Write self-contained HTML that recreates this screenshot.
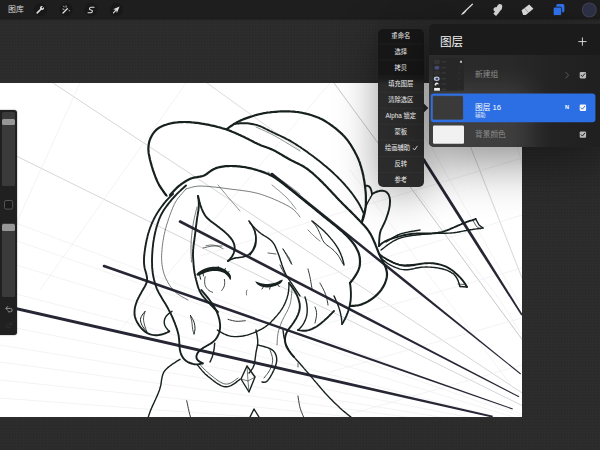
<!DOCTYPE html>
<html lang="zh"><head><meta charset="utf-8"><title>Procreate</title>
<style>
html,body{margin:0;padding:0}
body{width:600px;height:450px;overflow:hidden;position:relative;background:#2d2d2d;font-family:"Liberation Sans","Noto Sans CJK SC",sans-serif;}
.bg{position:absolute;left:0;top:0;width:600px;height:450px;background-color:#2d2d2d;
background-image:repeating-linear-gradient(0deg,rgba(0,0,0,.045) 0,rgba(0,0,0,.045) 1px,transparent 1px,transparent 3px),repeating-linear-gradient(90deg,rgba(0,0,0,.045) 0,rgba(0,0,0,.045) 1px,transparent 1px,transparent 3px);}
.topbar{position:absolute;left:0;top:0;width:600px;height:18px;background:#1e1e1e;box-shadow:0 1px 2px rgba(0,0,0,.55);}
.canvas{position:absolute;left:0;top:83px;width:522px;height:334px;background:#fff;overflow:hidden;}
.canvas svg{position:absolute;left:0;top:-83px;}
.side{position:absolute;left:0;top:110px;width:17.2px;height:224.8px;background:#202020;border-radius:0 3px 3px 0;box-shadow:0 0 1.5px rgba(0,0,0,.6);}
.track{position:absolute;left:2.2px;width:12.6px;background:#3a3a3a;border-radius:1.5px;}
.thumb{position:absolute;left:2.2px;width:12.6px;background:#979797;border-radius:1.5px;}
.menu{position:absolute;left:378px;top:29px;width:45.6px;height:158px;border-radius:5px;background:linear-gradient(180deg,#171717 0,#171717 47px,#2c2c2c 56px,#2c2c2c 100%);box-shadow:0 6px 42px rgba(0,0,0,.38);overflow:hidden;}
.layers{position:absolute;left:429px;top:23.6px;width:176px;height:123px;border-radius:5px;background:#1b1b1b;box-shadow:0 12px 52px 2px rgba(0,0,0,.46);overflow:hidden;}
.layers .rows{position:absolute;left:0;top:31px;width:176px;height:92px;background:linear-gradient(90deg,#2b2b2b 0,#292929 45%,#232323 70%,#1f1f1f 100%);}
.layers .glow{position:absolute;left:-10px;top:62px;width:112px;height:80px;background:rgba(255,255,255,.10);filter:blur(12px);}
.ov{position:absolute;left:0;top:0;}
.t{position:absolute;color:#ececec;white-space:nowrap;line-height:1;margin:0;font-family:"Liberation Sans","Noto Sans CJK SC",sans-serif;}
</style></head><body>
<div class="bg"></div>

<div class="canvas"><svg width="600" height="450" viewBox="0 0 600 450" fill="none" stroke-linecap="round" stroke-linejoin="round">
<path d="M53.0 83.0L523.0 393.5" stroke="#c4c4ca" stroke-width="0.7"/>
<path d="M0.0 148.0L523.0 406.0" stroke="#c4c4ca" stroke-width="0.7"/>
<path d="M0.0 217.0L523.0 414.7" stroke="#ebebee" stroke-width="0.6"/>
<path d="M0.0 260.0L523.0 420.0" stroke="#ebebee" stroke-width="0.6"/>
<path d="M0.0 345.0L523.0 430.7" stroke="#ebebee" stroke-width="0.6"/>
<path d="M0.0 380.0L523.0 435.1" stroke="#ebebee" stroke-width="0.6"/>
<path d="M0.0 235.0L523.0 416.9" stroke="#ebebee" stroke-width="0.6"/>
<path d="M0.0 290.0L523.0 423.8" stroke="#ebebee" stroke-width="0.6"/>
<path d="M0.0 325.0L523.0 428.2" stroke="#ebebee" stroke-width="0.6"/>
<path d="M0.0 362.0L523.0 432.8" stroke="#ebebee" stroke-width="0.6"/>
<path d="M0.0 398.0L523.0 437.4" stroke="#ebebee" stroke-width="0.6"/>
<path d="M334.0 83.0L523.0 340.7" stroke="#b0b0b6" stroke-width="0.7"/>
<path d="M395.0 83.0L523.0 310.0" stroke="#ebebee" stroke-width="0.6"/>
<path d="M445.5 83.0L522.0 278.0" stroke="#c4c4ca" stroke-width="0.7"/>
<path d="M500.0 83.0L523.0 167.5" stroke="#ebebee" stroke-width="0.6"/>
<path d="M80.0 83.0L17.0 222.0" stroke="#ebebee" stroke-width="0.6"/>
<path d="M186.0 83.0L40.0 290.0" stroke="#ebebee" stroke-width="0.6"/>
<path d="M207.0 83.0L300.0 150.0" stroke="#c4c4ca" stroke-width="0.6"/>
<path d="M330.0 83.0L120.0 330.0" stroke="#ebebee" stroke-width="0.6"/>
<path d="M522.0 158.0L300.0 225.0L200.0 256.0" stroke="#ebebee" stroke-width="0.6"/>
<path d="M522.0 215.0L300.0 284.0" stroke="#ebebee" stroke-width="0.6"/>
<path d="M522.0 268.0L300.0 331.0" stroke="#ebebee" stroke-width="0.6"/>
<path d="M522.0 318.0L330.0 372.0" stroke="#ebebee" stroke-width="0.6"/>
<path d="M522.0 365.0L340.0 417.0" stroke="#ebebee" stroke-width="0.6"/>
<path d="M415.0 190.0L500.0 300.0L522.0 335.0" stroke="#ebebee" stroke-width="0.6"/>
<path d="M350.0 170.0L470.0 330.0L522.0 400.0" stroke="#ebebee" stroke-width="0.6"/>
<path d="M103.57 267.23L328.38 345.82L512.53 409.47L512.87 408.53L329.19 343.48L104.43 264.77Z" fill="#262634" stroke="none"/>
<path d="M179.40 222.65L365.88 318.96L518.77 397.14L519.23 396.26L367.02 316.76L180.60 220.35Z" fill="#262634" stroke="none"/>
<path d="M-0.33 306.46L344.57 384.58L492.50 417.58L492.90 415.82L345.21 381.80L0.33 303.54Z" fill="#262634" stroke="none"/>
<path d="M422.48 160.58L481.52 253.66L521.28 315.45L522.72 314.55L483.84 252.18L424.92 159.02Z" fill="#262634" stroke="none"/>
<path d="M271.19 175.01L408.01 284.96L520.39 374.39L521.01 373.61L409.56 283.04L272.81 172.99Z" fill="#262634" stroke="none"/>
<path d="M196.4 274.2L197.5 273.1L198.6 272.1L199.8 271.2L201.0 270.4L202.4 269.7L203.8 269.1L205.2 268.5L206.6 268.1L208.1 267.6L209.5 267.3L211.0 267.0L212.5 266.8L214.0 266.7L215.5 266.7L217.0 266.8L218.5 267.0L220.0 267.3L221.4 267.8L222.8 268.4L224.2 269.0L225.5 269.8L226.7 270.7L227.8 271.7L228.9 272.7L229.9 273.9L230.6 275.2L231.0 276.6L231.0 278.2L230.8 279.6L230.1 279.9L229.4 278.6L228.6 277.3L227.6 276.1L226.6 275.0L225.5 274.0L224.2 273.1L222.9 272.5L221.4 272.0L220.0 271.6L218.5 271.3L217.0 271.1L215.5 271.0L214.0 271.0L212.5 271.1L211.0 271.3L209.5 271.6L208.0 271.9L206.6 272.3L205.2 272.8L203.8 273.4L202.4 274.0L201.0 274.6L199.6 275.2L198.2 275.8L197.0 275.5L196.4 274.2Z" fill="#17211f" stroke="none"/>
<path d="M255.2 281.2L256.6 281.8L258.0 282.3L259.4 282.8L260.9 283.2L262.4 283.5L263.9 283.8L265.4 284.0L266.9 284.0L268.4 283.9L269.9 283.7L271.4 283.5L272.9 283.2L274.3 282.9L275.8 282.4L277.2 281.9L278.6 281.3L279.9 280.6L281.3 279.9L282.5 279.6L282.6 280.8L281.8 282.1L280.7 283.2L279.5 284.0L278.2 284.7L276.8 285.3L275.4 285.9L273.9 286.3L272.5 286.7L271.0 287.0L269.5 287.2L268.0 287.4L266.5 287.4L265.0 287.3L263.5 287.0L262.0 286.7L260.6 286.2L259.2 285.6L257.9 284.7L256.8 283.8L255.9 282.5L255.2 281.2Z" fill="#17211f" stroke="none"/>
<path d="M104.00 266.00 l0.01 0" stroke="#262634" stroke-width="2.6"/>
<path d="M180.00 221.50 l0.01 0" stroke="#262634" stroke-width="2.6"/>
<path d="M0.00 305.00 l0.01 0" stroke="#262634" stroke-width="3.0"/>
<path d="M423.70 159.80 l0.01 0" stroke="#262634" stroke-width="2.9"/>
<path d="M272.00 174.00 l0.01 0" stroke="#262634" stroke-width="2.6"/>
<path d="M166.0 195.0L165.1 193.8L164.2 192.6L163.4 191.3L162.5 190.1L161.6 188.9L160.8 187.6L160.0 186.4L159.2 185.1L158.5 183.8L157.8 182.4L157.2 181.1L156.6 179.7L156.0 178.3L155.4 176.9L154.9 175.5L154.4 174.1L153.9 172.7L153.4 171.3L152.9 169.9L152.5 168.4L152.0 167.0L151.6 165.5L151.2 164.1L150.8 162.7L150.4 161.2L150.0 159.8L149.7 158.3L149.4 156.8L149.1 155.3L148.8 153.9L148.6 152.4L148.5 150.9L148.4 149.4L148.4 147.9L148.5 146.4L148.7 144.9L148.9 143.4L149.2 142.0L149.6 140.6L150.1 139.2L150.7 137.8L151.4 136.4L152.1 135.1L152.9 133.9L153.8 132.7L154.7 131.5L155.7 130.4L156.8 129.4L158.0 128.5L159.2 127.7L160.5 126.9L161.9 126.3L163.2 125.7L164.6 125.1L166.0 124.7L167.5 124.2L168.9 123.8L170.4 123.5L171.9 123.2L173.3 122.9L174.8 122.7L176.3 122.5L177.8 122.3L179.3 122.2L180.8 122.1L182.3 122.1L183.8 122.0L185.3 122.0L186.8 122.1L188.3 122.1L189.8 122.2L191.3 122.3L192.8 122.5L194.3 122.6L195.8 122.8L197.3 122.9L198.8 123.1L200.2 123.3L201.7 123.6L203.2 123.8L204.7 124.1L206.2 124.3L207.6 124.6L209.1 124.9L210.6 125.3L212.1 125.6L213.5 125.9L215.0 126.2L216.4 126.6L217.9 127.0L219.4 127.3L220.8 127.7L222.2 128.2L223.7 128.6L225.1 129.0L226.5 129.5L227.9 130.0L229.4 130.6L230.8 131.1L232.1 131.7L233.5 132.3L234.9 132.8L236.3 133.5L237.7 134.1L239.0 134.7L240.4 135.3L241.7 136.0L243.1 136.6L244.5 137.2L245.8 137.9L247.2 138.6L248.5 139.2L249.8 139.9L251.2 140.6L252.5 141.3L253.8 142.0L255.2 142.7L256.5 143.3L257.9 144.0L259.3 144.6L260.6 145.2L262.0 145.8L263.4 146.3L264.8 146.8L266.3 147.3L267.7 147.8L269.1 148.3L270.5 148.9L271.9 149.4L273.2 150.1L274.6 150.7L275.9 151.4L277.2 152.2L278.5 152.9L279.8 153.7L281.1 154.4L282.4 155.2L283.7 156.0L285.0 156.8L286.3 157.5L287.6 158.3L288.9 159.0L290.2 159.7L291.5 160.4L292.9 161.1L294.2 161.7L295.6 162.4L296.9 163.0L298.3 163.7L299.6 164.4L300.9 165.1L302.3 165.8L303.6 166.5L304.8 167.3L306.1 168.2L307.3 169.0L308.5 169.9L309.7 170.8L310.9 171.8L312.0 172.7L313.2 173.7L314.3 174.7L315.4 175.7L316.5 176.8L317.6 177.8L318.7 178.8L319.8 179.9L320.8 180.9L321.9 181.9L323.0 183.0L324.0 184.1L325.1 185.1L326.1 186.2L327.2 187.3L328.2 188.4L329.2 189.5L330.3 190.6L331.3 191.7L332.3 192.8L333.3 193.9L334.4 195.0L335.4 196.1L336.4 197.2L337.4 198.3L338.5 199.4L339.5 200.5L340.6 201.5L341.6 202.6L342.7 203.7L343.7 204.7L344.8 205.8L345.9 206.9L346.9 207.9L348.0 209.0L349.1 210.0L350.2 211.1L351.2 212.1L352.3 213.2L353.3 214.3L354.4 215.3L355.4 216.4L356.5 217.5L357.5 218.6L358.6 219.6L359.6 220.7L360.7 221.8L361.7 222.9L362.7 224.0L363.8 225.1L364.8 226.2L365.7 227.3L366.7 228.5L367.6 229.7L368.5 230.9L369.3 232.1L370.1 233.4L370.9 234.7L371.6 236.0L372.3 237.4L372.9 238.7L373.5 240.1L374.1 241.5L374.7 242.8L375.3 244.2L375.8 245.6L376.4 247.0L376.9 248.4L377.5 249.8L378.0 251.2L378.6 252.6L379.2 254.0L379.8 255.4L380.4 256.7L381.1 258.1L381.7 259.4L382.4 260.8L383.1 262.1L383.8 263.4L384.5 264.8L385.1 266.1L385.7 267.5L386.1 268.9L386.5 270.4L386.8 271.8L387.0 273.3L387.0 274.8L386.9 276.2L386.7 277.7L386.3 279.2L385.9 280.6L385.4 282.0L384.9 283.4L384.2 284.8L383.6 286.1L382.8 287.4L382.0 288.7L381.2 289.9L380.3 291.1L379.3 292.2L378.3 293.3L377.3 294.4L376.2 295.4L375.1 296.4L373.9 297.4L372.7 298.3L371.5 299.2L370.3 300.0L369.0 300.8L367.7 301.6L366.4 302.3L365.0 302.9L363.6 303.5L362.3 304.1L360.8 304.6L359.4 305.0L357.9 305.3L356.5 305.5L355.0 305.7L353.5 305.8L352.0 305.9L350.5 306.0L350.0 306.0" stroke="#17211f" stroke-width="2.2"/>
<path d="M227.0 129.0L228.2 128.1L229.4 127.2L230.6 126.3L231.9 125.5L233.1 124.6L234.4 123.8L235.7 123.1L237.0 122.3L238.3 121.6L239.7 121.0L241.0 120.3L242.4 119.7L243.8 119.1L245.2 118.6L246.6 118.1L248.0 117.6L249.5 117.1L250.9 116.6L252.3 116.2L253.8 115.7L255.2 115.3L256.7 114.9L258.1 114.5L259.6 114.2L261.1 113.8L262.5 113.5L264.0 113.2L265.5 113.0L267.0 112.7L268.5 112.5L270.0 112.4L271.5 112.2L273.0 112.0L274.5 111.9L276.0 111.8L277.5 111.6L279.0 111.5L280.5 111.4L282.0 111.4L283.5 111.3L285.0 111.3L286.5 111.3L288.0 111.3L289.5 111.4L291.0 111.5L292.5 111.6L294.0 111.7L295.5 111.9L297.0 112.0L298.5 112.2L300.0 112.5L301.4 112.7L302.9 113.0L304.4 113.3L305.9 113.6L307.3 114.0L308.8 114.4L310.2 114.8L311.7 115.2L313.1 115.7L314.5 116.2L315.9 116.7L317.3 117.3L318.7 117.8L320.1 118.5L321.4 119.1L322.8 119.8L324.1 120.5L325.4 121.3L326.7 122.1L327.9 122.9L329.2 123.7L330.4 124.6L331.7 125.5L332.9 126.4L334.1 127.3L335.3 128.2L336.4 129.1L337.6 130.1L338.7 131.1L339.9 132.1L341.0 133.1L342.1 134.1L343.1 135.2L344.2 136.3L345.2 137.4L346.1 138.6L347.1 139.7L348.0 140.9L348.9 142.1L349.7 143.4L350.6 144.6L351.4 145.9L352.1 147.2L352.9 148.5L353.7 149.8L354.4 151.1L355.1 152.4L355.8 153.8L356.5 155.1L357.1 156.4L357.8 157.8L358.4 159.2L358.9 160.6L359.5 162.0L360.0 163.4L360.4 164.9L360.9 166.3L361.3 167.7L361.7 169.2L362.1 170.6L362.5 172.1L362.8 173.6L363.2 175.0L363.5 176.5L363.7 178.0L364.0 179.5L364.3 180.9L364.5 182.4L364.7 183.9L364.9 185.4L365.1 186.9L365.3 188.4L365.4 189.9L365.6 191.4L365.7 192.9L365.8 194.4L365.9 195.9L365.9 197.4L365.9 198.9L365.9 200.4L365.9 201.9L365.9 203.4L365.8 204.9L365.7 206.4L365.5 207.9L365.3 209.4L365.1 210.9L364.8 212.4L364.5 213.8L364.1 215.3L363.7 216.7L363.3 218.2L362.8 219.6L362.3 221.0L362.0 222.0" stroke="#17211f" stroke-width="2.2"/>
<path d="M234.0 124.0L235.5 123.8L237.0 123.6L238.5 123.5L240.0 123.3L241.5 123.2L243.0 123.2L244.5 123.2L246.0 123.2L247.5 123.3L249.0 123.5L250.4 123.7L251.9 124.0L253.4 124.3L254.9 124.6L256.3 124.9L257.8 125.4L259.2 125.8L260.6 126.4L262.0 127.0L263.3 127.6L264.7 128.3L266.0 129.0L267.4 129.6L268.7 130.3L270.0 131.0L271.4 131.7L272.7 132.4L274.1 133.0L275.4 133.7L276.8 134.3L278.2 134.9L279.5 135.5L280.9 136.2L282.3 136.8L283.6 137.4L285.0 138.1L286.3 138.8L287.7 139.5L289.0 140.2L290.3 140.9L291.6 141.7L292.9 142.5L294.2 143.3L295.5 144.0L296.7 144.9L298.0 145.7L299.2 146.5L300.5 147.3L301.7 148.2L303.0 149.0L304.2 149.9L305.5 150.8L306.7 151.6L307.9 152.5L309.1 153.4L310.3 154.3L311.6 155.2L312.8 156.1L314.0 157.0L315.2 157.9L316.4 158.8L317.5 159.7L318.7 160.6L319.9 161.6L321.1 162.5L322.3 163.5L323.4 164.4L324.6 165.4L325.7 166.3L326.9 167.3L328.0 168.3L329.2 169.3L330.3 170.3L331.4 171.3L332.5 172.3L333.6 173.3L334.7 174.4L335.8 175.4L336.9 176.4L338.0 177.5L339.0 178.6L340.1 179.6L341.1 180.7L342.2 181.8L343.2 182.9L344.2 184.0L345.2 185.1L346.2 186.3L347.2 187.4L348.1 188.6L349.1 189.7L350.0 190.9L351.0 192.1L351.9 193.3L352.8 194.5L353.7 195.7L354.5 196.9L355.4 198.2L356.2 199.4L357.1 200.7L357.9 201.9L358.7 203.2L359.4 204.5L360.1 205.8L360.8 207.2L361.5 208.5L362.1 209.9L362.8 211.3L363.4 212.6L364.0 214.0" stroke="#17211f" stroke-width="1.9"/>
<path d="M170.0 195.0L171.0 193.9L172.1 192.8L173.1 191.7L174.1 190.6L175.2 189.5L176.2 188.5L177.3 187.4L178.4 186.4L179.6 185.5L180.8 184.5L182.0 183.6L183.2 182.8L184.5 182.0L185.7 181.2L187.0 180.4L188.4 179.7L189.7 179.1L191.1 178.5L192.5 178.0L194.0 177.6L195.4 177.3L196.9 177.1L198.4 176.8L199.8 176.6L201.3 176.3L202.7 176.0L204.1 175.5L205.4 174.8L206.6 174.0L207.8 173.1L209.0 172.2L210.2 171.3L211.4 170.5L212.7 169.7L214.0 169.0L215.4 168.4L216.8 167.9L218.2 167.5L219.7 167.1L221.1 166.8L222.6 166.6L224.1 166.4L225.6 166.2L227.1 166.1L228.6 166.1L230.1 166.0L231.6 166.0L233.1 166.1L234.6 166.1L236.1 166.2L237.6 166.3L239.1 166.4L240.6 166.6L242.1 166.8L243.6 167.0L245.1 167.2L246.5 167.5L248.0 167.8L249.5 168.1L250.9 168.4L252.4 168.8L253.9 169.2L255.3 169.6L256.8 170.0L258.2 170.5L259.6 170.9L261.1 171.4L262.5 171.9L263.9 172.4L265.3 172.9L266.7 173.5L268.1 174.1L269.4 174.7L270.8 175.4L272.1 176.1L273.4 176.8L274.7 177.6L275.9 178.4L277.2 179.3L278.4 180.2L279.6 181.0L280.8 181.9L282.0 182.8L283.2 183.7L284.4 184.7L285.6 185.6L286.8 186.5L288.0 187.4L289.2 188.4L290.3 189.3L291.5 190.2L292.7 191.1L293.9 192.1L295.1 193.0L296.2 194.0L297.4 194.9L298.6 195.9L299.7 196.8L300.9 197.8L302.0 198.7L303.2 199.7L304.4 200.7L305.5 201.6L306.7 202.6L307.9 203.5L309.0 204.5L310.2 205.4L311.4 206.3L312.5 207.3L313.7 208.2L314.9 209.2L316.0 210.1L317.2 211.1L318.4 212.0L319.5 213.0L320.7 213.9L321.9 214.9L323.0 215.8L324.2 216.8L325.4 217.7L326.5 218.7L327.7 219.6L328.9 220.5L330.1 221.5L331.2 222.4L332.4 223.4L333.6 224.3L334.8 225.2L335.9 226.2L337.1 227.1L338.2 228.1L339.4 229.1L340.5 230.1L341.7 231.0L342.8 232.0L343.9 233.1L345.0 234.1L346.1 235.1L347.1 236.2L348.2 237.3L349.2 238.4L350.2 239.5L351.2 240.7L352.1 241.8L353.0 243.0L353.9 244.2L354.8 245.5L355.6 246.7L356.3 248.0L357.0 249.4L357.7 250.7L358.3 252.1L358.8 253.5L359.2 254.9L359.5 256.4L359.8 257.8L359.9 259.3L360.0 260.8L360.0 262.3L359.9 263.8L359.8 265.3L359.5 266.8L359.1 268.2L358.6 269.6L358.0 271.0L357.4 272.3L356.7 273.6L355.9 274.9L355.1 276.2L354.3 277.4L353.4 278.7L352.5 279.9L351.6 281.0L350.6 282.2L350.0 283.0" stroke="#17211f" stroke-width="2.2"/>
<path d="M256.0 127.0L257.4 127.6L258.8 128.3L260.2 128.9L261.6 129.5L262.9 130.1L264.3 130.7L265.7 131.4L267.1 132.0L268.5 132.7L269.8 133.3L271.2 134.0L272.5 134.7L273.9 135.4L275.2 136.1L276.6 136.9L277.9 137.6L279.2 138.4L280.5 139.1L281.8 139.9L283.1 140.7L284.4 141.5L285.7 142.3L287.0 143.1L288.3 143.8L289.6 144.6L290.9 145.4L292.2 146.2L293.5 147.0L294.8 147.8L296.1 148.6L297.4 149.4L298.7 150.2L300.0 151.0" stroke="#17211f" stroke-width="0.5"/>
<path d="M268.0 172.0L269.3 172.8L270.6 173.6L271.9 174.4L273.2 175.2L274.6 176.0L275.9 176.8L277.2 177.6L278.5 178.4L279.8 179.2L281.1 180.1L282.3 180.9L283.6 181.7L284.9 182.6L286.1 183.5L287.4 184.4L288.6 185.3L289.8 186.2L291.1 187.2L292.3 188.1L293.5 189.0L294.7 189.9L295.9 190.9L297.2 191.8L298.4 192.8L299.6 193.7L300.0 194.0" stroke="#17211f" stroke-width="0.5"/>
<path d="M173.0 194.0L171.9 195.0L170.8 196.1L169.7 197.1L168.7 198.2L167.6 199.3L166.6 200.4L165.6 201.5L164.7 202.7L163.7 203.9L162.8 205.1L161.9 206.3L161.0 207.5L160.1 208.7L159.3 209.9L158.4 211.2L157.6 212.5L156.8 213.7L156.1 215.0L155.3 216.4L154.6 217.7L153.9 219.0L153.3 220.4L152.6 221.7L152.0 223.1L151.4 224.5L150.9 225.9L150.3 227.3L149.8 228.7L149.3 230.2L148.9 231.6L148.4 233.0L148.0 234.5L147.6 235.9L147.3 237.4L146.9 238.9L146.6 240.3L146.3 241.8L146.0 243.3L145.7 244.8L145.5 246.3L145.2 247.8L145.0 249.2L144.8 250.7L144.6 252.2L144.4 253.7L144.3 255.2L144.1 256.7L144.0 258.2L144.0 259.7L144.0 261.2L144.0 262.7L144.1 264.2L144.3 265.7L144.5 267.2L144.8 268.7L145.2 270.1L145.6 271.6L146.0 273.0L146.4 274.5L146.7 275.9L147.0 277.4L147.1 278.9L147.0 280.3L146.8 281.8L146.4 283.2L145.8 284.5L145.1 285.9L144.4 287.2L143.6 288.5L142.9 289.8L142.1 291.1L141.4 292.4L140.7 293.7L139.9 295.0L139.2 296.4L138.5 297.7L137.9 299.0L137.2 300.4L136.7 301.8L136.2 303.2L135.7 304.7L135.3 306.1L135.0 307.6L134.7 309.0L134.6 310.5L134.5 312.0L134.5 313.5L134.6 315.0L134.9 316.5L135.3 317.9L135.8 319.3L136.4 320.7L137.0 322.0L137.8 323.3L138.6 324.6L139.4 325.8L140.3 327.0L141.3 328.2L142.3 329.3L143.4 330.3L144.5 331.3L145.7 332.1L147.0 332.9L148.4 333.6L149.7 334.1L151.2 334.6L152.6 334.9L154.1 335.1L155.6 335.2L157.1 335.2L158.5 335.1L160.0 334.8L161.5 334.5L162.9 334.1L164.4 333.7L165.7 333.1L167.1 332.5L168.4 331.8L169.3 331.3" stroke="#17211f" stroke-width="1.9"/>
<path d="M169.3 331.3L168.2 330.2L167.2 329.0L166.3 327.8L165.4 326.5L164.8 325.2L164.4 323.8L164.2 322.3L164.3 320.8L164.6 319.4L165.2 318.0L165.9 316.7L166.8 315.5L167.9 314.4L169.1 313.4L170.3 312.5L171.6 311.6L172.0 311.3" stroke="#17211f" stroke-width="1.4"/>
<path d="M186.0 185.5L184.9 186.5L183.8 187.5L182.7 188.5L181.5 189.5L180.4 190.6L179.3 191.6L178.3 192.6L177.2 193.7L176.1 194.8L175.1 195.9L174.1 197.0L173.1 198.1L172.1 199.2L171.1 200.4L170.2 201.6L169.2 202.7L168.3 203.9L167.4 205.1L166.5 206.3L165.6 207.5L164.7 208.8L163.9 210.0L163.1 211.3L162.4 212.6L161.6 213.9L160.9 215.2L160.3 216.6L159.7 218.0L159.1 219.3L158.6 220.8L158.1 222.2L157.6 223.6L157.2 225.0L156.7 226.5L156.3 227.9L155.9 229.4L155.6 230.8L155.2 232.3L154.9 233.8L154.6 235.2L154.3 236.7L154.0 238.2L153.8 239.7L153.5 241.2L153.3 242.7L153.1 244.1L153.0 245.6L152.8 247.1L152.6 248.6L152.5 250.1L152.4 251.6L152.3 253.1L152.2 254.6L152.1 256.1L152.1 257.6L152.0 259.1L152.0 260.6L152.0 262.2L152.1 263.7L152.1 265.2L152.1 266.7L152.2 268.2L152.4 269.7L152.5 271.2L152.7 272.7L152.9 274.1L153.2 275.6L153.4 277.1L153.8 278.6L154.1 280.0L154.5 281.5L154.9 282.9L155.3 284.4L155.8 285.8L156.3 287.2L156.8 288.6L157.4 290.0L158.1 291.4L158.7 292.7L159.5 294.0L160.2 295.3L161.0 296.6L161.8 297.9L162.5 299.2L163.3 300.5L164.1 301.7L164.9 303.0L165.7 304.3L166.4 305.6L167.2 306.9L167.9 308.2L168.6 309.6L169.3 310.9L170.0 312.2L170.7 313.6L171.3 314.9L172.0 316.3L172.6 317.7L173.2 319.1L173.7 320.5L174.3 321.8L174.9 323.2L175.4 324.7L175.9 326.1L176.4 327.5L176.9 328.9L177.3 330.3L177.7 331.8L178.1 333.2L178.5 334.7L178.7 336.2L178.9 337.7L179.1 339.2L179.2 340.7L179.3 342.2L179.4 343.7L179.4 345.2L179.5 346.7L179.7 348.2L179.9 349.6L180.2 351.1L180.5 352.5L181.0 354.0L181.6 355.3L182.3 356.6L183.1 357.9L184.0 359.0L185.1 360.1L186.2 361.0L187.5 361.8L188.8 362.5L190.1 363.0L191.6 363.5L193.0 363.9L194.4 364.2L195.9 364.4L197.4 364.4L198.8 364.2L200.3 363.9L201.7 363.6L202.7 363.3" stroke="#17211f" stroke-width="1.9"/>
<path d="M186.0 189.0L185.0 190.1L184.0 191.2L183.0 192.4L182.0 193.5L181.0 194.6L180.0 195.8L179.1 197.0L178.1 198.1L177.2 199.4L176.4 200.6L175.6 201.9L174.9 203.2L174.2 204.5L173.6 205.9L172.9 207.3L172.4 208.7L171.8 210.1L171.3 211.5L170.8 212.9L170.2 214.3L169.7 215.8L169.2 217.2L168.7 218.6L168.2 220.0L167.8 221.5L167.3 222.9L166.9 224.3L166.4 225.8L166.0 227.2L165.6 228.7L165.2 230.1L164.9 231.6L164.6 233.1L164.2 234.6L163.9 236.0L163.7 237.5L163.4 239.0L163.1 240.5L162.9 242.0L162.7 243.5L162.5 245.0L162.3 246.5L162.1 248.0L162.0 249.5L161.9 251.0L161.8 252.5L161.7 254.0L161.6 255.5L161.6 257.0L161.6 258.5L161.7 260.0L161.7 261.5L161.9 263.0L162.0 264.5L162.2 266.0L162.5 267.5L162.8 269.0L163.1 270.5L163.5 271.9L163.9 273.4L164.4 274.8L164.9 276.2L165.5 277.6L166.1 279.0L166.8 280.3L167.5 281.6L168.2 283.0L169.0 284.2L169.8 285.5L170.7 286.7L171.6 288.0L172.5 289.1L173.5 290.2L174.6 291.3L175.7 292.3L176.8 293.3L178.0 294.2L179.3 295.0L180.5 295.8L181.8 296.6L183.1 297.4L184.5 298.1L185.8 298.8L187.1 299.5L188.0 300.0" stroke="#17211f" stroke-width="0.6"/>
<path d="M186.0 189.0L187.4 188.5L188.9 188.1L190.3 187.7L191.8 187.2L193.2 186.9L194.7 186.6L196.2 186.4L197.7 186.2L199.2 186.1L200.7 186.1L202.2 186.1L203.7 186.2L205.2 186.2L206.7 186.3L208.2 186.5L209.7 186.6L211.2 186.7L212.7 186.9L214.2 187.0L215.7 187.2L217.2 187.4L218.7 187.5L220.2 187.7L221.7 187.9L223.2 188.1L224.7 188.3L226.2 188.5L227.6 188.7L229.1 188.9L230.6 189.1L232.1 189.3L233.6 189.5L235.1 189.6L236.6 189.8L238.1 190.0L239.6 190.2L241.1 190.4L242.6 190.6L244.1 190.8L245.6 191.0L247.1 191.2L248.6 191.5L250.0 191.7L251.5 192.0L253.0 192.3L254.5 192.6L255.9 193.0L257.4 193.3L258.8 193.7L260.3 194.1L261.7 194.6L263.2 195.1L264.6 195.5L266.0 196.1L267.4 196.6L268.8 197.1L270.2 197.7L271.6 198.2L273.0 198.8L274.4 199.4L275.8 200.0L277.2 200.6L278.5 201.2L279.9 201.9L281.3 202.5L282.6 203.2L284.0 203.8L285.3 204.5L286.6 205.2L288.0 205.9L289.3 206.7L290.6 207.5L291.8 208.3L293.0 209.2L294.1 210.2L295.2 211.2L296.2 212.3L297.2 213.4L298.2 214.6L299.1 215.8L300.0 217.0" stroke="#17211f" stroke-width="0.6"/>
<path d="M218.0 185.0L219.0 186.2L219.9 187.3L220.9 188.5L221.9 189.7L222.9 190.9L223.8 192.0L224.8 193.2L225.8 194.4L226.8 195.6L227.8 196.7L228.7 197.9L229.7 199.0L230.7 200.2L231.7 201.4L232.7 202.5L233.7 203.7L234.7 204.8L235.7 206.0L236.7 207.1L237.7 208.3L238.7 209.5L239.7 210.6L240.0 211.0" stroke="#17211f" stroke-width="0.5"/>
<path d="M272.0 185.0L273.2 186.0L274.4 186.9L275.5 187.9L276.7 188.9L277.9 189.8L279.1 190.8L280.2 191.8L281.4 192.8L282.5 193.8L283.7 194.8L284.8 195.9L285.9 196.9L287.0 198.0L288.0 199.1L289.0 200.3L290.0 201.4L291.0 202.6L291.9 203.8L292.9 205.0L293.8 206.2L294.7 207.4L295.7 208.6L296.0 209.0" stroke="#17211f" stroke-width="0.5"/>
<path d="M159.0 185.0L159.9 186.3L160.7 187.6L161.6 188.9L162.5 190.2L163.4 191.5L164.4 192.7L165.4 194.0L166.3 195.2L167.0 196.0" stroke="#17211f" stroke-width="1.4"/>
<path d="M145.0 311.5L144.0 312.7L143.0 313.9L142.1 315.1L141.3 316.5L140.8 317.9L140.5 319.4L140.6 321.0L140.9 322.5L141.4 323.9L142.1 325.3L142.8 326.7L143.7 328.0L144.6 329.2L145.7 330.3L146.7 331.5" stroke="#17211f" stroke-width="1.0"/>
<path d="M145.0 311.5L144.6 313.0L144.1 314.5L143.8 316.0L143.6 317.5L143.5 319.1L143.6 320.6L143.9 322.1L144.2 323.6L144.6 325.1L145.0 326.6L145.5 328.1L146.0 329.5L146.5 331.0L146.7 331.5" stroke="#17211f" stroke-width="0.8"/>
<path d="M190.5 315.5L191.3 316.8L192.1 318.2L192.8 319.5L193.5 320.9L194.1 322.3L194.5 323.8L194.7 325.4L194.9 326.9L195.0 328.4L194.9 330.0L194.6 331.5L194.3 333.0L194.0 334.0" stroke="#17211f" stroke-width="1.0"/>
<path d="M190.5 315.5L190.8 317.0L191.1 318.6L191.5 320.1L191.8 321.7L192.0 323.2L192.2 324.8L192.3 326.3L192.5 327.9L192.7 329.5L193.1 331.0L193.5 332.5L194.0 334.0" stroke="#17211f" stroke-width="0.8"/>
<path d="M198.0 196.0L198.2 197.5L198.5 199.0L198.6 200.5L198.8 202.0L198.8 203.5L198.8 205.0L198.8 206.5L198.6 208.0L198.5 209.5L198.3 211.0L198.0 212.5L197.8 214.0L197.6 215.5L197.3 216.9L197.1 218.4L196.9 219.9L196.7 221.4L196.5 222.9L196.3 224.4L196.1 225.9L195.9 227.4L195.7 228.9L195.6 230.4L195.4 231.9L195.2 233.4L195.0 234.9L194.8 236.4L194.6 237.9L194.4 239.4L194.2 240.9L194.0 242.4L193.8 243.9L193.6 245.4L193.4 246.9L193.3 248.4L193.1 249.9L193.1 251.4L193.0 252.9L193.0 254.4L193.0 255.9L193.1 257.5L193.2 259.0L193.3 260.5L193.4 262.0L193.5 263.5L193.6 265.0L193.7 266.5L193.9 268.0L194.1 269.5L194.3 271.0L194.5 272.5L194.8 274.0L195.1 275.4L195.4 276.9L195.8 278.4L196.1 279.8L196.5 281.3L196.9 282.8L197.3 284.2L197.7 285.7L198.1 287.1L198.6 288.5L199.2 289.9L199.8 291.3L200.5 292.6L201.3 293.9L202.2 295.2L203.1 296.4L204.0 297.5L205.0 298.7L206.0 299.8L207.0 300.9L208.1 302.0L209.1 303.1L210.2 304.2L211.2 305.3L212.3 306.3L213.3 307.4L214.4 308.5L215.5 309.5L216.6 310.6L217.6 311.7L218.0 312.0" stroke="#17211f" stroke-width="1.9"/>
<path d="M197.0 207.0L196.6 208.5L196.3 209.9L195.9 211.4L195.6 212.9L195.2 214.4L194.9 215.8L194.5 217.3L194.2 218.8L193.9 220.3L193.6 221.8L193.3 223.3L193.1 224.8L192.8 226.2L192.6 227.7L192.4 229.2L192.2 230.8L192.0 232.3L191.9 233.8L191.7 235.3L191.6 236.8L191.4 238.3L191.3 239.8L191.2 241.3L191.1 242.8L191.1 244.3L191.0 245.8L191.0 247.4L191.0 248.9L191.0 250.4L191.0 251.9L191.1 253.4L191.2 254.9L191.2 256.5L191.3 258.0L191.4 259.5L191.4 261.0L191.5 262.0" stroke="#17211f" stroke-width="0.6"/>
<path d="M198.0 196.0L198.4 197.5L198.7 198.9L199.1 200.4L199.5 201.9L199.9 203.3L200.3 204.8L200.8 206.2L201.3 207.6L201.8 209.0L202.4 210.4L203.0 211.8L203.7 213.1L204.5 214.4L205.3 215.7L206.2 216.9L207.2 218.0L208.3 219.0L209.4 220.0L210.6 221.0L211.8 221.9L213.0 222.8L214.2 223.7L215.4 224.6L216.6 225.5L217.8 226.4L219.0 227.3L220.2 228.3L221.4 229.2L222.6 230.1L223.7 231.1L224.9 232.1L226.0 233.1L227.1 234.1L228.2 235.2L229.2 236.3L230.2 237.4L231.1 238.6L232.0 239.8L232.8 241.1L233.4 242.4L234.0 243.8L234.4 245.3L234.6 246.7L234.7 248.2L234.6 249.6L234.3 251.1L233.9 252.5L233.4 253.9L232.7 255.3L232.0 256.5L231.1 257.7L230.1 258.9L229.1 260.0L228.0 261.0" stroke="#17211f" stroke-width="1.9"/>
<path d="M228.0 261.0L229.3 260.3L230.7 259.6L232.1 259.0L233.5 258.5L234.9 258.1L236.4 257.8L237.9 257.7L239.4 257.5L240.9 257.3L242.4 257.1L243.9 256.7L245.3 256.3L246.7 255.7L248.0 255.0L249.2 254.1L250.3 253.2L251.3 252.1L252.2 250.9L253.0 249.6L253.7 248.2L254.2 246.8L254.7 245.4L255.1 243.9L255.5 242.5L255.7 241.0L255.9 239.5L255.9 238.0L255.9 236.5L255.7 235.0L255.4 233.5L255.0 232.0L254.5 230.6L253.9 229.2L253.3 227.8L252.6 226.5L251.9 225.1L251.1 223.9L250.2 222.6L249.3 221.4L249.0 221.0" stroke="#17211f" stroke-width="1.5999999999999999"/>
<path d="M250.0 223.0L251.0 224.1L252.1 225.2L253.1 226.3L254.2 227.4L255.2 228.5L256.3 229.5L257.4 230.6L258.5 231.6L259.7 232.5L260.9 233.5L262.1 234.3L263.4 235.2L264.7 236.0L265.9 236.7L267.2 237.5L268.5 238.4L269.7 239.3L270.8 240.2L271.9 241.3L272.8 242.4L273.7 243.7L274.5 244.9L275.2 246.3L275.8 247.6L276.4 249.0L277.0 250.4L277.5 251.8L278.1 253.2L278.6 254.7L279.1 256.1L279.6 257.5L280.1 259.0L280.5 260.4L281.0 261.8L281.5 263.3L281.9 264.7L282.4 266.1L282.9 267.6L283.5 269.0L284.0 270.4L284.6 271.8L285.2 273.2L285.9 274.5L286.6 275.8L287.4 277.1L288.2 278.4L289.0 279.7L289.9 280.9L290.7 282.2L291.6 283.4L292.4 284.7L293.3 285.9L294.1 287.2L295.0 288.4L295.8 289.7L296.6 291.0L297.5 292.2L298.3 293.5L299.2 294.7L300.0 296.0" stroke="#17211f" stroke-width="1.4"/>
<path d="M255.0 231.0L255.2 232.5L255.4 234.1L255.6 235.6L255.8 237.1L255.9 238.7L256.0 240.2L256.0 241.8L255.9 243.3L255.7 244.8L255.3 246.2L254.7 247.7L254.0 249.0L253.3 250.4L252.4 251.6L251.5 252.9L250.6 254.2L250.0 255.0" stroke="#17211f" stroke-width="1.4"/>
<path d="M201.3 290.0L202.3 291.2L203.3 292.3L204.2 293.5L205.2 294.6L206.2 295.8L207.1 297.0L208.1 298.1L209.0 299.3L209.9 300.5L210.8 301.7L211.7 303.0L212.5 304.3L213.3 305.5L214.1 306.8L214.9 308.1L215.6 309.5L216.3 310.8L216.9 312.2L217.5 313.6L218.0 315.0L218.5 316.4L218.9 317.9L219.3 319.3L219.6 320.8L219.8 322.3L220.0 323.8L220.1 325.3L220.1 326.8L220.0 328.3L219.8 329.8L219.5 331.3L219.1 332.7L218.6 334.1L218.0 335.5L217.3 336.8L216.5 338.1L215.6 339.3L214.6 340.4L213.5 341.4L212.4 342.4L211.1 343.2L209.9 344.0L208.5 344.8L207.2 345.5L205.9 346.3L204.6 347.0L203.3 347.8L202.1 348.7L200.9 349.6L199.7 350.5L198.7 351.6L197.8 352.7L197.1 354.0L196.6 355.3L196.4 356.6L196.5 357.9L197.0 359.1L197.8 360.2L198.8 361.1L200.1 361.9L201.4 362.6L202.7 363.3" stroke="#17211f" stroke-width="1.9"/>
<path d="M312.0 221.0L313.2 221.9L314.4 222.9L315.6 223.8L316.8 224.8L318.0 225.7L319.1 226.7L320.3 227.7L321.4 228.7L322.6 229.7L323.7 230.8L324.7 231.8L325.8 232.9L326.9 234.0L327.9 235.1L328.9 236.3L329.9 237.4L330.9 238.6L331.9 239.7L332.8 240.9L333.8 242.1L334.7 243.3L335.6 244.6L336.4 245.8L337.2 247.1L338.0 248.4L338.7 249.7L339.4 251.1L340.1 252.5L340.7 253.9L341.2 255.3L341.8 256.7L342.3 258.1L342.7 259.6L343.1 261.0L343.5 262.5L343.8 264.0L344.0 265.0" stroke="#17211f" stroke-width="1.4"/>
<path d="M312.0 221.0L313.0 222.2L313.9 223.4L314.9 224.6L315.8 225.8L316.6 227.0L317.4 228.3L318.1 229.6L318.8 231.0L319.4 232.4L320.0 233.8L320.6 235.2L321.2 236.6L321.7 238.0L322.3 239.4L323.0 240.7L323.8 242.0L324.7 243.1L325.7 244.2L326.9 245.1L328.1 246.0L329.3 246.8L330.5 247.7L331.7 248.7L332.9 249.7L334.0 250.7L335.0 251.8L336.1 252.9L337.0 254.0L338.0 255.2L338.8 256.5L339.6 257.8L340.4 259.1L341.1 260.4L341.8 261.7L342.5 263.1L343.0 264.0" stroke="#17211f" stroke-width="0.9"/>
<path d="M308.0 230.0L309.1 231.1L310.2 232.3L311.3 233.4L312.4 234.5L313.6 235.6L314.7 236.6L315.9 237.7L317.1 238.7L318.4 239.7L319.6 240.7L320.0 241.0" stroke="#17211f" stroke-width="0.6"/>
<path d="M283.0 249.0L283.8 250.3L284.5 251.7L285.3 253.0L286.1 254.3L286.8 255.7L287.6 257.0L288.3 258.4L289.0 259.7L289.8 261.1L290.5 262.4L291.2 263.7L291.8 264.4L291.5 263.5L291.0 262.1L290.3 260.7L289.7 259.3L289.0 257.9L288.2 256.6L287.3 255.3L286.5 254.1L285.6 252.8L284.7 251.5L283.9 250.3L283.0 249.0" stroke="#17211f" stroke-width="0.9"/>
<path d="M280.0 265.0L280.7 266.4L281.3 267.9L282.1 269.3L282.8 270.7L283.6 272.0L284.5 273.3L285.5 274.5L286.6 275.7L287.7 276.8L288.8 277.9L290.0 279.0" stroke="#17211f" stroke-width="0.9"/>
<path d="M350.0 283.0L350.2 284.5L350.4 286.0L350.6 287.6L350.7 289.1L350.8 290.6L350.9 292.1L350.9 293.7L350.9 295.2L350.9 296.7L350.8 298.2L350.7 299.8L350.5 301.3L350.3 302.8L350.0 304.3L349.7 305.8L349.3 307.3L348.9 308.8L348.5 310.2L348.0 311.7L347.5 313.1L346.9 314.5L346.4 315.9L345.7 317.3L345.1 318.7L344.3 320.1L343.6 321.4L342.8 322.7L342.0 324.0" stroke="#17211f" stroke-width="1.9"/>
<path d="M342.0 324.0L341.9 322.5L341.7 320.9L341.6 319.4L341.4 317.9L341.1 316.3L340.8 314.8L340.5 313.3L340.1 311.8L339.7 310.3L339.3 308.9L338.8 307.4L338.3 305.9L337.7 304.5L337.2 303.1L336.6 301.6L335.9 300.2L335.3 298.8L334.7 297.4L334.0 296.0" stroke="#17211f" stroke-width="1.4"/>
<path d="M334.0 311.0L332.9 312.1L331.9 313.2L330.8 314.3L329.7 315.3L328.7 316.4L327.6 317.5L326.5 318.5L325.3 319.5L324.2 320.6L323.1 321.6L321.9 322.5L320.7 323.5L319.5 324.4L318.3 325.3L317.1 326.2L315.8 327.0L314.5 327.7L313.1 328.4L311.7 329.1L310.3 329.6L308.9 330.1L307.4 330.4L306.0 330.7L304.5 330.8L303.0 330.7L301.5 330.6L300.0 330.4L298.5 330.1L298.0 330.0" stroke="#17211f" stroke-width="1.9"/>
<path d="M298.0 330.0L299.1 329.0L300.2 327.9L301.3 326.8L302.2 325.6L303.1 324.4L303.8 323.1L304.5 321.7L305.2 320.4L305.7 318.9L306.2 317.5L306.6 316.0L306.9 314.5L307.1 313.0L307.2 311.5L307.2 310.0L307.2 308.5L307.1 306.9L306.9 305.4L306.7 303.9L306.4 302.4L306.1 300.9L305.7 299.5L305.3 298.0L305.0 297.0" stroke="#17211f" stroke-width="1.4"/>
<path d="M315.0 323.0L315.4 321.5L315.7 320.0L316.0 318.5L316.3 316.9L316.5 315.4L316.6 313.9L316.5 312.4L316.3 310.9L315.9 309.4L315.4 308.0L315.0 307.0" stroke="#17211f" stroke-width="0.9"/>
<path d="M328.0 305.0L327.8 303.5L327.5 302.0L327.2 300.4L326.9 298.9L326.6 297.4L326.1 296.0L325.6 294.5L325.1 293.1L324.5 291.7L323.8 290.3L323.1 288.9L322.4 287.5L321.7 286.2L321.0 284.8L320.2 283.5L320.0 283.0" stroke="#17211f" stroke-width="0.9"/>
<path d="M312.0 289.0L311.8 287.4L311.5 285.9L311.3 284.3L311.0 282.8L310.7 281.3L310.5 279.7L310.2 278.2L309.9 276.6L309.5 275.1L309.2 273.6L308.8 272.0L308.4 270.5L308.0 269.0" stroke="#17211f" stroke-width="0.9"/>
<path d="M289.0 283.0L289.9 284.2L290.8 285.4L291.7 286.6L292.6 287.9L293.5 289.1L294.3 290.4L295.1 291.7L295.8 293.0L296.5 294.3L297.2 295.7L297.7 297.1L298.3 298.5L298.7 300.0L299.1 301.4L299.5 302.9L299.7 304.4L299.8 305.9L299.8 307.4L299.6 308.8L299.4 310.3L299.0 311.8L298.5 313.2L298.0 314.6L297.4 316.0L296.7 317.4L296.0 318.7L295.2 320.0L294.4 321.3L293.6 322.6L292.7 323.8L291.9 325.0L291.0 326.2L290.0 327.4L289.1 328.6L288.2 329.8L287.4 331.1L286.7 332.4L286.1 333.8L285.6 335.2L285.3 336.6L285.1 338.1L285.0 339.6L285.1 341.1L285.3 342.6L285.6 344.0L286.0 345.4L286.6 346.8L287.3 348.2L288.1 349.5L288.9 350.7L289.8 351.9L290.7 353.1L291.7 354.3L292.7 355.5L293.7 356.6L294.0 357.0" stroke="#17211f" stroke-width="1.9"/>
<path d="M292.0 289.0L291.9 290.5L291.8 292.0L291.7 293.5L291.5 295.1L291.4 296.6L291.2 298.1L291.0 299.6L290.8 301.1L290.5 302.6L290.1 304.0L289.7 305.5L289.1 306.9L288.6 308.3L287.9 309.7L287.3 311.0L286.6 312.4L285.8 313.7L285.1 315.1L284.4 316.4L283.7 317.7L283.0 319.1L282.3 320.5L281.7 321.9L281.1 323.3L280.6 324.7L280.0 326.1L279.6 327.5L279.1 329.0L278.7 330.4L278.3 331.9L278.0 333.4L277.8 334.9L277.6 336.4L277.4 337.9L277.3 339.4L277.2 341.0L277.1 342.5L277.1 344.0L277.0 345.0" stroke="#17211f" stroke-width="0.6"/>
<path d="M365.0 186.0L366.3 185.8L367.5 185.8L368.7 186.2L369.6 187.0L370.4 188.1L371.0 189.5L371.4 190.9L371.7 192.4L372.0 194.0" stroke="#17211f" stroke-width="1.9"/>
<path d="M372.0 194.0L373.3 193.3L374.7 192.6L376.0 192.0L377.4 191.5L378.9 191.1L380.3 190.8L381.8 190.7L383.2 190.8L384.6 191.2L385.9 191.7L387.0 192.6L387.9 193.6L388.7 194.8L389.2 196.2L389.6 197.6L389.9 199.1L390.0 200.6L390.0 202.1L389.9 203.6L389.8 205.1L389.6 206.6L389.3 208.0L389.0 209.5L388.6 211.0L388.2 212.5L387.8 213.9L387.3 215.3L386.8 216.8L386.3 218.2L385.8 219.6L385.2 221.0L384.6 222.4L384.0 223.8L383.3 225.1L382.6 226.5L382.0 227.8L381.3 229.2L380.7 230.6L380.3 232.0L379.9 233.4L379.7 234.9L379.5 236.4L379.4 237.9L379.3 239.4L379.2 241.0L379.1 242.5L379.1 244.0L379.0 245.5L379.0 246.0" stroke="#17211f" stroke-width="1.9"/>
<path d="M372.0 195.0L371.2 196.3L370.4 197.6L369.7 199.0L368.9 200.3L368.2 201.7L367.5 203.0L366.8 204.4L366.2 205.8L365.7 207.2L365.1 208.7L364.7 210.1L364.2 211.6L363.8 213.1L363.4 214.6L363.0 216.0L362.6 217.5L362.3 219.0L362.0 220.0" stroke="#17211f" stroke-width="1.4"/>
<path d="M379.0 246.0L380.1 245.0L381.2 243.9L382.3 243.0L383.6 242.2L384.9 241.4L386.2 240.8L387.6 240.2L389.0 239.6L390.4 239.1L391.8 238.6L393.3 238.2L394.7 237.7L396.2 237.3L397.6 236.8L399.1 236.4L400.5 236.1L402.0 235.7L403.4 235.3L404.9 235.0L406.4 234.7L407.9 234.4L409.4 234.2L410.9 234.0L412.4 233.8L413.9 233.7L415.4 233.6L416.9 233.5L418.4 233.5L419.9 233.5L421.4 233.5L422.9 233.5L424.4 233.5L425.9 233.5L427.4 233.5L429.0 233.5L430.5 233.5L432.0 233.4L433.5 233.3L435.0 233.2L436.5 233.0L438.0 232.8L439.4 232.5L440.9 232.2L442.4 231.8L443.8 231.3L445.2 230.9L446.7 230.4L448.1 229.8L449.5 229.3L450.9 228.7L452.3 228.1L453.7 227.5L455.0 226.9L456.4 226.3L457.8 225.7L459.2 225.1L460.6 224.5L461.9 223.9L463.3 223.3L464.8 222.8L466.2 222.2L467.6 221.7L469.0 221.2L470.4 220.7L471.9 220.3L473.3 219.8L474.7 219.3L475.7 219.0" stroke="#17211f" stroke-width="1.9"/>
<path d="M381.0 250.0L382.2 249.1L383.4 248.2L384.6 247.3L385.8 246.3L387.0 245.4L388.2 244.5L389.5 243.7L390.7 242.8L392.0 242.0L393.3 241.2L394.6 240.5L396.0 239.8L397.3 239.2L398.7 238.6L400.1 238.1L401.6 237.6L403.0 237.2L404.5 236.9L406.0 236.6L407.5 236.3L408.9 236.0L410.4 235.8L411.9 235.6L413.4 235.4L414.9 235.2L416.4 235.0L417.9 234.8L419.4 234.7L421.0 234.5L422.5 234.4L424.0 234.2L425.5 234.1L427.0 234.0L428.5 233.8L430.0 233.7L431.5 233.6L433.0 233.4L434.5 233.3L436.0 233.3L437.5 233.2L439.0 233.2L440.6 233.2L442.1 233.2L443.6 233.2L445.1 233.2L446.6 233.2L448.1 233.1L449.6 233.1L451.1 233.0L452.6 232.9L454.1 232.7L455.6 232.5L457.1 232.3L458.6 232.0L460.1 231.7L461.6 231.4L463.1 231.1L464.6 230.8L466.1 230.6L467.5 230.3L469.0 230.0L470.5 229.8L472.0 229.6L473.5 229.3L475.0 229.1L476.5 228.9L478.0 228.7L479.5 228.5L481.0 228.3L482.5 228.1L483.0 228.0" stroke="#17211f" stroke-width="1.4"/>
<path d="M475.7 219.0L479.0 225.0L483.0 228.0" stroke="#17211f" stroke-width="1.4"/>
<path d="M473.0 220.5L476.5 226.5L480.5 229.0" stroke="#17211f" stroke-width="0.7"/>
<path d="M379.0 254.0L380.2 254.9L381.4 255.8L382.6 256.7L383.9 257.5L385.2 258.3L386.5 259.1L387.8 259.8L389.1 260.5L390.5 261.2L391.8 261.8L393.2 262.5L394.5 263.1L395.9 263.7L397.3 264.2L398.8 264.7L400.2 265.1L401.7 265.4L403.2 265.6L404.6 265.8L406.1 265.9L407.6 265.8L409.1 265.7L410.6 265.6L412.1 265.4L413.6 265.2L415.1 264.9L416.6 264.6L418.1 264.4L419.5 264.1L421.0 263.8L422.5 263.6L424.0 263.4L425.5 263.3L427.0 263.2L428.5 263.1L430.0 263.1L431.5 263.2L433.0 263.3L434.5 263.5L436.0 263.7L437.5 264.0L438.9 264.3L440.4 264.7L441.8 265.1L443.3 265.6L444.7 266.1L446.1 266.7L447.4 267.4L448.7 268.1L450.0 268.9L451.3 269.7L452.5 270.6L453.7 271.5L454.8 272.5L455.9 273.5L457.1 274.5L458.1 275.5L459.2 276.6L460.3 277.7L461.3 278.8L462.2 279.9L463.2 281.1L464.0 282.3L464.9 283.6L465.7 284.9L466.5 286.1L467.0 287.0" stroke="#17211f" stroke-width="1.9"/>
<path d="M382.0 259.0L383.2 260.0L384.3 260.9L385.5 261.9L386.7 262.8L387.9 263.6L389.2 264.4L390.5 265.2L391.9 265.8L393.2 266.5L394.6 267.1L396.0 267.7L397.4 268.2L398.8 268.7L400.3 269.1L401.8 269.4L403.2 269.6L404.7 269.8L406.2 269.8L407.7 269.7L409.2 269.5L410.7 269.3L412.2 269.0L413.7 268.7L415.1 268.3L416.6 268.0L418.1 267.7L419.6 267.5L421.1 267.3L422.6 267.1L424.1 267.1L425.6 267.0L427.1 267.0L428.6 267.1L430.1 267.1L431.6 267.2L433.1 267.4L434.6 267.5L436.1 267.7L437.6 267.9L439.1 268.2L440.6 268.5L442.0 268.8L443.5 269.2L444.9 269.6L446.4 270.1L447.8 270.7L449.1 271.3L450.5 272.0L451.7 272.8L453.0 273.6L454.1 274.6L455.1 275.7L456.0 276.8L456.8 278.1L457.5 279.4L458.1 280.8L458.6 282.2L459.1 283.6L459.5 285.1L460.0 286.5" stroke="#17211f" stroke-width="1.4"/>
<path d="M460.0 286.5L467.0 287.0" stroke="#17211f" stroke-width="1.4"/>
<path d="M458.0 284.0L464.0 284.5" stroke="#17211f" stroke-width="0.7"/>
<path d="M386.0 242.0L387.3 241.2L388.6 240.3L389.8 239.5L391.1 238.7L392.4 237.9L393.7 237.1L395.1 236.4L396.4 235.7L397.8 235.0L399.2 234.5L400.6 233.9L402.1 233.5L403.5 233.1L405.0 232.7L406.5 232.4L408.0 232.1L409.5 231.8L411.0 231.5L412.5 231.2L414.0 231.0L415.5 230.7L417.0 230.5L418.5 230.3L420.0 230.0" stroke="#17211f" stroke-width="1.4"/>
<path d="M388.0 260.0L389.4 260.7L390.7 261.4L392.1 262.1L393.4 262.8L394.8 263.4L396.3 263.9L397.7 264.3L399.2 264.6L400.7 264.9L402.2 265.0L403.7 265.1L405.3 265.1L406.8 265.0L408.3 264.9L409.8 264.9L411.4 264.7L412.9 264.6L414.4 264.5L415.9 264.4L417.5 264.2L419.0 264.1L420.0 264.0" stroke="#17211f" stroke-width="1.4"/>
<path d="M217.3 330.0L218.6 330.8L219.9 331.6L221.2 332.4L222.5 333.1L223.8 333.8L225.2 334.4L226.5 335.0L228.0 335.5L229.4 335.9L230.9 336.2L232.3 336.4L233.8 336.6L235.3 336.6L236.8 336.6L238.3 336.5L239.8 336.4L241.3 336.2L242.8 336.0L244.3 335.7L245.8 335.4L247.2 335.1L248.7 334.6L250.1 334.2L251.5 333.7L252.9 333.2L254.3 332.6L255.7 332.0L257.1 331.4L258.4 330.7L259.8 330.0L261.1 329.3L262.4 328.6L263.7 327.8L265.0 327.0L266.2 326.1L267.4 325.2L268.5 324.2L269.7 323.2L270.8 322.2L271.8 321.1L272.9 320.1L273.9 319.0L274.9 317.8L275.9 316.7L276.9 315.6L277.9 314.4L278.8 313.3L279.8 312.1L280.6 310.8L281.5 309.6L282.3 308.3L283.1 307.0L283.8 305.7L284.5 304.4L285.1 303.0L285.7 301.6L286.2 300.2L286.8 298.8L287.2 297.4L287.6 295.9L288.0 294.5L288.3 293.0L288.5 291.5L288.7 290.0L288.8 288.5L288.9 287.0L288.9 285.5L289.0 284.0L289.0 283.0" stroke="#17211f" stroke-width="1.4"/>
<path d="M228.0 319.3L229.5 319.8L231.0 320.2L232.5 320.6L234.0 320.9L235.5 321.2L237.0 321.3L238.6 321.3L240.1 321.2L241.7 321.1L243.2 320.9L244.8 320.8L245.3 320.7" stroke="#17211f" stroke-width="0.9"/>
<path d="M247.0 290.0L246.5 291.6L246.3 293.3L246.6 295.0" stroke="#17211f" stroke-width="0.6"/>
<path d="M199.5 274.5L200.6 279.2" stroke="#17211f" stroke-width="1.0"/>
<path d="M203.0 272.5L203.4 276.0" stroke="#17211f" stroke-width="0.9"/>
<path d="M218.2 266.4L217.4 269.0" stroke="#17211f" stroke-width="0.9"/>
<path d="M225.4 268.4L224.4 270.6" stroke="#17211f" stroke-width="0.9"/>
<path d="M229.0 271.4L227.4 273.2" stroke="#17211f" stroke-width="0.9"/>
<path d="M205.2 276.7L204.9 278.2L204.7 279.8L204.6 281.3L204.7 282.9L204.9 284.4L205.3 285.8L206.0 287.2L206.8 288.4L207.8 289.5L209.0 290.5L210.3 291.3L211.7 291.9L212.6 292.3" stroke="#17211f" stroke-width="0.8"/>
<path d="M224.4 279.4L224.6 281.0L224.7 282.5L224.6 284.1L224.4 285.6L223.9 287.0L223.2 288.3L222.3 289.6L221.7 290.5" stroke="#17211f" stroke-width="0.8"/>
<path d="M263.6 286.6L262.0 289.0" stroke="#17211f" stroke-width="0.9"/>
<path d="M270.4 286.6L269.6 289.2" stroke="#17211f" stroke-width="0.9"/>
<path d="M277.6 284.8L279.4 286.8" stroke="#17211f" stroke-width="0.9"/>
<path d="M203.0 248.0L204.5 247.6L206.0 247.3L207.5 246.9L209.1 246.6L210.6 246.3L212.1 246.1L213.7 246.0L215.2 245.9L216.8 245.9L218.4 245.9L219.9 246.0L221.5 246.0L222.0 246.0" stroke="#17211f" stroke-width="0.7"/>
<path d="M206.0 245.6L207.6 245.4L209.1 245.2L210.7 245.0L212.2 245.0L213.8 245.2L215.3 245.5L216.8 245.9L218.2 246.4L219.7 247.0L221.1 247.7L222.5 248.4L223.0 248.6" stroke="#17211f" stroke-width="0.6"/>
<path d="M268.0 253.0L276.0 254.0" stroke="#17211f" stroke-width="0.7"/>
<path d="M214.7 343.3L214.5 344.9L214.4 346.4L214.2 348.0L214.0 349.6L213.7 351.1L213.4 352.7L213.0 354.2L212.6 355.7L212.1 357.2L211.5 358.6L210.9 360.1L210.2 361.5L210.0 362.0" stroke="#17211f" stroke-width="1.4"/>
<path d="M256.0 330.0L256.3 331.5L256.6 333.0L256.9 334.5L257.2 336.0L257.4 337.5L257.6 339.0L257.7 340.5L257.8 342.0L257.7 343.5L257.5 345.0L257.2 346.5L256.9 348.0L256.6 349.5L256.3 351.0L256.0 352.5L255.8 354.0L255.6 355.5L255.4 357.0L255.2 358.5L255.0 360.0L254.8 361.5L254.5 363.0L254.2 364.5L253.7 365.9L253.1 367.3L252.4 368.6L251.5 369.9L250.6 371.1L249.7 372.2L249.0 373.0" stroke="#17211f" stroke-width="1.4"/>
<path d="M197.3 364.7L198.2 365.9L199.2 367.1L200.1 368.3L201.1 369.4L202.1 370.6L203.1 371.7L204.1 372.8L205.2 373.9L206.3 374.9L207.5 375.9L208.6 376.9L209.8 377.8L211.0 378.8L212.2 379.8L213.4 380.7L214.6 381.6L215.8 382.5L217.1 383.3L218.4 384.2L219.7 384.9L221.0 385.6L222.4 386.2L223.8 386.6L225.2 386.8L226.7 386.8L228.1 386.6L229.5 386.2L230.9 385.6L232.2 384.9L233.5 384.1L234.7 383.3L236.0 382.4L237.2 381.4L238.4 380.5L239.6 379.6L240.0 379.3" stroke="#17211f" stroke-width="1.4"/>
<path d="M200.0 364.5L201.0 365.6L202.0 366.8L203.1 367.9L204.1 369.0L205.2 370.1L206.3 371.1L207.4 372.2L208.6 373.2L209.7 374.2L210.9 375.1L212.1 376.1L213.3 377.1L214.5 378.0L215.7 378.9L216.9 379.9L218.1 380.7L219.4 381.6L220.7 382.3L222.0 383.0L223.4 383.6L224.8 383.9L226.3 384.1L227.7 384.0L229.1 383.6L230.5 383.1L231.8 382.4L233.1 381.6L234.3 380.7L235.6 379.8L236.8 378.9L238.0 378.0" stroke="#17211f" stroke-width="0.7"/>
<path d="M247.0 366.0L241.0 379.0L249.0 392.0L255.0 377.0L247.0 366.0" stroke="#17211f" stroke-width="1.4"/>
<path d="M247.0 366.0L248.0 381.0L249.0 392.0" stroke="#17211f" stroke-width="0.6"/>
<path d="M241.0 379.0L248.0 381.0L255.0 377.0" stroke="#17211f" stroke-width="0.6"/>
<path d="M262.0 382.0L263.2 382.3L264.5 382.3L265.6 382.1L266.7 381.4L267.7 380.5L268.6 379.4L269.5 378.2L270.3 376.9L271.0 375.6L271.8 374.3L272.5 372.9L273.1 371.6L273.8 370.2L274.4 368.8L275.0 367.4L275.5 366.0L276.0 364.6L276.3 363.1L276.6 361.7L276.7 360.2L276.7 358.7L276.5 357.2L276.2 355.8L275.7 354.4L275.1 353.1L274.2 351.9L273.3 350.8L272.1 349.9L270.9 349.1L269.6 348.5L268.2 347.9L266.8 347.4L265.3 347.0L263.9 346.5L262.4 346.1L260.9 345.8L259.5 345.4L258.0 345.0" stroke="#17211f" stroke-width="1.4"/>
<path d="M264.0 378.0L265.0 376.8L265.9 375.6L266.9 374.4L267.8 373.2L268.6 372.0L269.4 370.7L270.2 369.3L270.8 368.0L271.4 366.6L271.9 365.1L272.2 363.7L272.5 362.2L272.6 360.7L272.6 359.2L272.4 357.7L272.1 356.2L271.7 354.8L271.2 353.3L270.7 351.9L270.2 350.5L270.0 350.0" stroke="#17211f" stroke-width="0.8"/>
<path d="M180.0 359.3L178.7 360.1L177.4 360.9L176.2 361.7L174.9 362.6L173.6 363.4L172.3 364.2L171.1 365.1L169.9 366.0L168.7 366.9L167.5 367.9L166.4 368.9L165.4 370.0L164.5 371.2L163.7 372.4L163.1 373.8L162.6 375.2L162.2 376.6L161.9 378.1L161.6 379.6L161.4 381.1L161.2 382.6L161.0 384.1L160.7 385.6L160.3 387.0L159.9 388.5L159.5 389.9L158.9 391.4L158.4 392.8L157.8 394.2L157.2 395.6L156.6 397.0L156.0 398.3L155.4 399.7L154.7 401.1L154.1 402.5L153.5 403.9L152.8 405.2L152.2 406.6L151.6 408.0L151.0 409.4L150.4 410.8L149.9 412.2L149.4 413.7L148.9 415.1L148.4 416.6L148.0 418.0" stroke="#17211f" stroke-width="1.4"/>
<path d="M186.7 400.7L187.0 402.2L187.4 403.8L187.7 405.3L188.0 406.8L188.3 408.4L188.7 409.9L189.0 411.4L189.4 412.9L189.8 414.5L190.2 416.0L190.6 417.5L190.7 418.0" stroke="#17211f" stroke-width="0.9"/>
<path d="M283.0 330.0L283.2 331.5L283.4 333.0L283.6 334.5L283.8 336.0L284.1 337.5L284.4 338.9L284.7 340.4L285.1 341.8L285.6 343.3L286.2 344.7L286.8 346.0L287.4 347.4L288.2 348.7L288.9 350.0L289.7 351.3L290.5 352.6L291.4 353.8L292.3 355.0L293.3 356.1L294.3 357.3L295.2 358.4L296.2 359.5L297.3 360.7L298.3 361.8L299.3 362.9L300.3 364.0L301.3 365.2L302.3 366.3L303.2 367.4L304.2 368.6L305.2 369.7L306.2 370.9L307.2 372.0L308.2 373.2L309.1 374.3L310.1 375.5L311.1 376.6L312.1 377.8L313.1 378.9L314.0 380.1L315.0 381.2L316.0 382.4L317.0 383.5L317.9 384.7L318.9 385.8L319.9 387.0L320.8 388.1L321.8 389.3L322.8 390.4L323.8 391.5L324.8 392.7L325.8 393.8L326.9 394.9L327.9 396.0L328.9 397.1L330.0 398.2L331.0 399.2L332.1 400.3L333.2 401.4L334.2 402.4L335.3 403.5L336.4 404.6L337.5 405.6L338.6 406.6L339.7 407.7L340.8 408.7L341.9 409.7L343.1 410.7L344.2 411.6L345.4 412.6L346.5 413.6L347.7 414.5L348.9 415.5L350.0 416.4L351.2 417.4L352.0 418.0" stroke="#17211f" stroke-width="1.4"/>
<path d="M298.0 396.0L298.2 397.5L298.4 399.1L298.7 400.6L298.9 402.2L299.2 403.7L299.5 405.3L299.8 406.8L300.2 408.3L300.7 409.8L301.2 411.3L301.8 412.7L302.4 414.2L303.0 415.6L303.6 417.0L304.0 418.0" stroke="#17211f" stroke-width="0.9"/>
<path d="M298.0 363.0L298.0 367.0" stroke="#17211f" stroke-width="0.7"/>
<path d="M250.0 417.0L254.0 409.0L259.0 417.0" stroke="#17211f" stroke-width="1.4"/>
</svg></div>
<div class="topbar"></div>
<div class="side"><div class="track" style="top:2px;height:74px"></div><div class="thumb" style="top:8.7px;height:6.3px"></div><div class="track" style="top:112.5px;height:74.8px"></div><div class="thumb" style="top:114.4px;height:6.7px"></div></div>
<div class="menu"></div>
<div class="layers"><div class="rows"></div><div class="glow"></div></div>
<svg class="ov" width="600" height="450" viewBox="0 0 600 450">
<circle cx="40.5" cy="9.7" r="6.6" fill="#181818"/>
<circle cx="66" cy="9.7" r="6.6" fill="#181818"/>
<circle cx="91" cy="9.7" r="6.6" fill="#181818"/>
<circle cx="116.3" cy="9.7" r="6.6" fill="#181818"/>
<g transform="translate(1 -0.3)"><path d="M36.2 13.2L39.6 9.8" stroke="#e0e0e0" stroke-width="1.6" stroke-linecap="round"/><circle cx="41" cy="8.3" r="2.1" fill="#e0e0e0"/><path d="M41 8.3L43.4 5.9" stroke="#181818" stroke-width="1.3"/></g>
<g transform="translate(1 -0.2)"><path d="M62 13.2L66.3 8.9" stroke="#e0e0e0" stroke-width="1.3" stroke-linecap="round"/><path d="M62.4 6.3l1 1M65 6.1l.3 1.2M61.9 9.3l1.1.3M68 10.6l.7.5" stroke="#e0e0e0" stroke-width=".8" stroke-linecap="round"/></g>
<path d="M93.3 6.8H89.6Q88.3 6.8 88.3 8.3Q88.3 9.8 90.5 10Q92.6 10.3 92.4 11.9Q92.2 13.3 90.8 13.3H87.6" stroke="#e0e0e0" stroke-width="1.2" fill="none" stroke-linecap="round" transform="translate(91 10) scale(.86) translate(-91 -10) skewX(-12) translate(2.7 0)"/>
<g transform="translate(0.2 0)"><path d="M119.4 6.4L112.9 9.3L115.9 10.1L116.7 13.1Z" fill="#e0e0e0"/><path d="M115.6 10.4L113.2 12.8" stroke="#e0e0e0" stroke-width="1.1" stroke-linecap="round"/></g>
<path d="M472.4 4.3L465 11.2" stroke="#d8d8d8" stroke-width="1.3" stroke-linecap="round"/><path d="M465.6 10.2Q463 11.4 460.8 14.9Q464.4 14.4 466.3 11.2Z" fill="#d8d8d8"/>
<path transform="translate(497.3 9.4) scale(1.12) translate(-497.3 -9.2) translate(0.6 0.6)" d="M498.6 3.8Q500.8 3.6 501.2 5.6L500.7 8.4Q498.9 9.9 498.1 11.6L495.6 14.6L493.2 12.4L494.6 10.4Q492.6 9.6 493.4 7.9Q494.4 6.2 496.2 6.6Q496.8 4.2 498.6 3.8Z" fill="#cfcfcf"/>
<g transform="translate(528.8 9.4) scale(1.32) translate(-528.8 -9.4) translate(-1.1 0.2)"><path d="M524.4 9.9L530.2 5.4L533.4 8.7L527.6 13.4L525.6 13.4Z" fill="#d4d4d4"/><path d="M526.6 8.3L529.8 11.7" stroke="#8a8a8a" stroke-width=".6"/></g>
<g transform="translate(0.8 0.5)"><rect x="555.4" y="3.6" width="8.2" height="8.2" rx="1.6" fill="#2e6fe6"/><rect x="552.4" y="6.6" width="8.4" height="8.4" rx="1.6" fill="#2e6fe6" stroke="#1e1e1e" stroke-width=".9"/></g>
<circle cx="589.3" cy="9.9" r="7.5" fill="#3d3f4e"/><circle cx="589.3" cy="9.9" r="6.5" fill="#2d3045"/>
<rect x="4.5" y="200.5" width="8.2" height="8.6" rx="1.6" fill="#1a1a1a" stroke="#5a5a5a" stroke-width=".9"/>
<g transform="translate(0 -0.2)"><path d="M6.3 308.6H10.4Q12.2 308.6 12.2 310.4Q12.2 312 10.4 312H8.2" fill="none" stroke="#9a9a9a" stroke-width=".9" stroke-linecap="round"/><path d="M7.8 306.6L5.8 308.6L7.8 310.6" fill="none" stroke="#9a9a9a" stroke-width=".9" stroke-linecap="round" stroke-linejoin="round"/></g>
<g transform="translate(0 0.6)"><path d="M11.7 323.6H7.6Q5.8 323.6 5.8 325.4Q5.8 327 7.6 327H9.8" fill="none" stroke="#303030" stroke-width=".9" stroke-linecap="round"/><path d="M10.2 321.6L12.2 323.6L10.2 325.6" fill="none" stroke="#303030" stroke-width=".9" stroke-linecap="round" stroke-linejoin="round"/></g>
<path d="M377.5 44.0H423.5" stroke="rgba(255,255,255,.07)" stroke-width=".6"/>
<path d="M377.5 60.0H423.5" stroke="rgba(255,255,255,.07)" stroke-width=".6"/>
<path d="M377.5 76.1H423.5" stroke="rgba(255,255,255,.07)" stroke-width=".6"/>
<path d="M377.5 92.2H423.5" stroke="rgba(255,255,255,.07)" stroke-width=".6"/>
<path d="M377.5 108.2H423.5" stroke="rgba(255,255,255,.07)" stroke-width=".6"/>
<path d="M377.5 124.2H423.5" stroke="rgba(255,255,255,.07)" stroke-width=".6"/>
<path d="M377.5 140.2H423.5" stroke="rgba(255,255,255,.07)" stroke-width=".6"/>
<path d="M377.5 156.4H423.5" stroke="rgba(255,255,255,.07)" stroke-width=".6"/>
<path d="M377.5 172.4H423.5" stroke="rgba(255,255,255,.07)" stroke-width=".6"/>
<path d="M413.3 148.5L414.5 150L417.2 146.2" fill="none" stroke="#f0f0f0" stroke-width=".8" stroke-linecap="round" stroke-linejoin="round"/>
<path d="M423.3 103L428.3 108L423.3 113Z" fill="#1f1f1f"/>
<path d="M578.3 41.6H586.5M582.4 37.5V45.7" stroke="#e8e8e8" stroke-width=".9"/>
<rect x="432.9" y="57.9" width="31" height="32.9" rx="1" fill="#272727"/>
<rect x="433.9" y="59.6" width="6" height="4.4" rx=".8" fill="#343434"/>
<ellipse cx="436.9" cy="67.7" rx="2.6" ry="2" fill="#464b78"/>
<rect x="433.9" y="71" width="6" height="4" rx=".8" fill="#2f2f30"/>
<ellipse cx="436.7" cy="78.7" rx="2.9" ry="2.2" fill="#b9c6dc"/><ellipse cx="436.9" cy="78.8" rx="1.5" ry="1.1" fill="#3b4468"/>
<path d="M434.6 85.4Q434.6 82.6 436.8 82.6Q438.6 82.6 438.8 84.4L437.4 84.2Q436.6 83.8 436.2 85.4Z" fill="#e4e4e4"/>
<rect x="434.1" y="87.9" width="5.8" height="2.8" fill="#f2f2f2"/>
<rect x="441.4" y="61.3" width="4.6" height="1" fill="#3d3d3f"/><rect x="458.2" y="61.3" width="2" height="1" fill="#343436"/>
<rect x="441.4" y="67.2" width="4.6" height="1" fill="#3d3d3f"/><rect x="458.2" y="67.2" width="2" height="1" fill="#343436"/>
<rect x="441.4" y="72.5" width="4.6" height="1" fill="#3d3d3f"/><rect x="458.2" y="72.5" width="2" height="1" fill="#343436"/>
<rect x="441.4" y="78.2" width="4.6" height="1" fill="#3d3d3f"/><rect x="458.2" y="78.2" width="2" height="1" fill="#343436"/>
<rect x="441.4" y="83.4" width="4.6" height="1" fill="#3d3d3f"/><rect x="458.2" y="83.4" width="2" height="1" fill="#343436"/>
<rect x="441.4" y="88.8" width="4.6" height="1" fill="#3d3d3f"/><rect x="458.2" y="88.8" width="2" height="1" fill="#343436"/>
<rect x="460" y="60.8" width="2" height="2" fill="#bdbdbd"/>
<path d="M565.8 72.4L568.6 75.2L565.8 78" fill="none" stroke="#6a6a6a" stroke-width=".8" stroke-linecap="round" stroke-linejoin="round"/>
<rect x="579.6999999999999" y="72.0" width="6.4" height="6.4" rx="1.1" fill="#b9b9b9"/>
<path d="M581.1999999999999 75.3L582.4 76.60000000000001L584.8 73.7" fill="none" stroke="#222" stroke-width=".95" stroke-linecap="round" stroke-linejoin="round"/>
<rect x="430.8" y="93.5" width="164.6" height="28.8" rx="3" fill="#2c6ee4"/>
<rect x="432.4" y="95.6" width="31" height="24.3" rx="1.5" fill="#3a3a3a" stroke="#3f7cec" stroke-width=".5"/>
<rect x="579.6999999999999" y="104.6" width="6.4" height="6.4" rx="1.1" fill="#f4f4f4"/>
<path d="M581.1999999999999 107.89999999999999L582.4 109.2L584.8 106.3" fill="none" stroke="#2a6de3" stroke-width=".95" stroke-linecap="round" stroke-linejoin="round"/>
<rect x="433" y="125.5" width="31" height="18.2" rx="1.2" fill="#f1f1f1"/>
<rect x="579.6999999999999" y="131.4" width="6.4" height="6.4" rx="1.1" fill="#b9b9b9"/>
<path d="M581.1999999999999 134.7L582.4 136.0L584.8 133.1" fill="none" stroke="#222" stroke-width=".95" stroke-linecap="round" stroke-linejoin="round"/>
</svg>
<div class="t" style="left:8px;top:5.5px;font-size:7.9px;color:#dcdcdc">图库</div>
<div class="t" style="left:378px;width:45.6px;text-align:center;top:32.8px;font-size:6.3px">重命名</div>
<div class="t" style="left:378px;width:45.6px;text-align:center;top:48.7px;font-size:6.3px">选择</div>
<div class="t" style="left:378px;width:45.6px;text-align:center;top:64.8px;font-size:6.3px">拷贝</div>
<div class="t" style="left:378px;width:45.6px;text-align:center;top:81.0px;font-size:6.3px">填充图层</div>
<div class="t" style="left:378px;width:45.6px;text-align:center;top:97.0px;font-size:6.3px">清除选区</div>
<div class="t" style="left:378px;width:45.6px;text-align:center;top:113.0px;font-size:6.3px">Alpha 锁定</div>
<div class="t" style="left:378px;width:45.6px;text-align:center;top:129.0px;font-size:6.3px">蒙板</div>
<div class="t" style="left:378px;width:39px;text-align:center;top:145.1px;font-size:6.3px">绘画辅助</div>
<div class="t" style="left:378px;width:45.6px;text-align:center;top:161.2px;font-size:6.3px">反转</div>
<div class="t" style="left:378px;width:45.6px;text-align:center;top:177.2px;font-size:6.3px">参考</div>
<div class="t" style="left:440px;top:36px;font-size:11.6px;color:#f2f2f2">图层</div>
<div class="t" style="left:475px;top:71px;font-size:7.7px;color:#8c8c8c">新建组</div>
<div class="t" style="left:475px;top:103.5px;font-size:7.7px;color:#fff">图层 16</div>
<div class="t" style="left:475px;top:112.8px;font-size:5.3px;color:#e8eefc">辅助</div>
<div class="t" style="left:565px;top:105px;font-size:5.6px;color:#fff;font-weight:bold">N</div>
<div class="t" style="left:475px;top:130.5px;font-size:7.7px;color:#8c8c8c">背景颜色</div>
</body></html>
